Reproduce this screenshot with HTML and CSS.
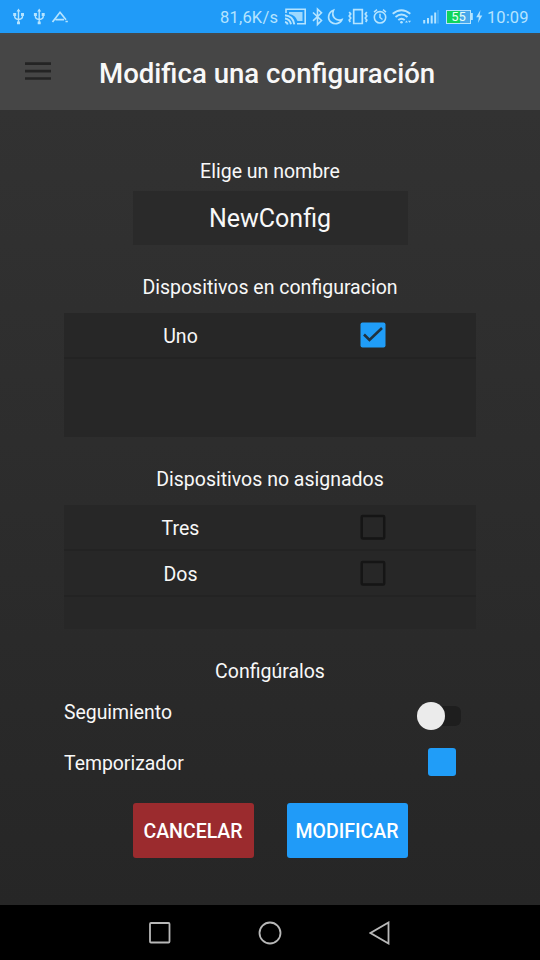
FILE: index.html
```html
<!DOCTYPE html>
<html lang="es">
<head>
<meta charset="utf-8">
<title>Modifica una configuración</title>
<link rel="stylesheet" href="styles.css">
</head>
<body>
<div class="screen">
  <div class="status">
    <svg class="status-left" width="80" height="33" viewBox="0 0 80 33">
      <g id="usb" fill="none" stroke="currentColor" stroke-width="1.4">
        <path d="M18.500 10v13M14.700 14.500v2q0 2.500 3.800 3M22.500 14.500v2q0 2.500-3.800 3"/>
        <path d="M18.500 8.500l2 3h-4zM13.200 13h3v3h-3zM21 13h3v3h-3zM17 21.500h3v2.700h-3z" fill="currentColor" stroke="none"/>
      </g>
      <use href="#usb" x="20.700"/>
      <path d="M52.500 22l7.500-9.700 6 7.500M55.500 19.700h8.500M65.500 21.500h2.300" fill="none" stroke="currentColor" stroke-width="1.700"/>
    </svg>
    <span class="speed">81,6K/s</span>
    <svg width="130" height="33" viewBox="284 0 130 33" fill="none" stroke="currentColor" stroke-width="1.6">
      <path d="M286 13V9.300h19.200v14.400H297"/>
      <path d="M289 12h13.500v9h-5q-2-6-8.500-7z" fill="currentColor" stroke="none" opacity=".85"/>
      <path d="M285 15.300q8 .7 9.300 9M285 18.500q5 .7 6 5.800M285 22q2.300.3 2.700 2.500" stroke-width="1.900"/>
      <path d="M313 12.500l8.500 8-4 4V9l4 3.800-8.500 8" stroke-width="1.600"/>
      <path d="M333.500 10.200c-5.500 2.200-6.500 8.800-2.300 12 4 3 9.500 1.200 10.800-2.700-6.500 2.200-10.800-3.200-8.500-9.300z" stroke-width="1.700"/>
      <path d="M353.700 9.700h8.600v13.800h-8.600zM349.200 12l1.500 2-1.500 2 1.500 2-1.500 2 1 2M366.800 12l-1.500 2 1.500 2-1.500 2 1.500 2-1 2" stroke-width="1.700"/>
      <circle cx="380" cy="17.300" r="5.700"/><path d="M380 13.700v3.800l2.500 2M374 12.200l3-2.500M386 12.200l-3-2.500" stroke-width="1.500"/>
      <path d="M392.700 13.800q8.800-7.300 17.600 0M395.500 17q6-5 12 0M398.300 20q3.200-2.700 6.400 0" stroke-width="1.900"/>
      <circle cx="401.500" cy="22.200" r="1.300" fill="currentColor" stroke="none"/>
      <path d="M405 22.500l1.500-2 1.500 2zM408 20.800l1.500 2 1.500-2z" fill="currentColor" stroke="none"/>
    </svg>
    <svg width="31" height="33" viewBox="414 0 31 33" fill="none" stroke="currentColor" stroke-width="2">
      <path d="M424.200 20v3.500M428 18v5.500M431.700 15.500v8"/><path d="M435.200 12.500v11" /><path d="M438 10v13.500" opacity=".35" stroke-width="1.400"/>
    </svg>
    <span class="battery"><span class="level">55</span></span>
    <svg width="16" height="33" viewBox="471 0 16 33" fill="currentColor">
      <path d="M471 13h1.800v7H471zM480.500 10l-4.300 7.300h2.700l-1 5.700 4.400-7.500h-2.700z"/>
    </svg>
    <span class="clock">10:09</span>
  </div>

  <header class="appbar">
    <svg class="menu" width="26" height="19" viewBox="0 0 26 19"><path d="M0 1.600h26M0 9.100h26M0 16.500h26" stroke="#242424" stroke-width="2.700"/></svg>
    <h1>Modifica una configuración</h1>
  </header>

  <main>
    <h2>Elige un nombre</h2>
    <div class="name">NewConfig</div>

    <h2 class="gap">Dispositivos en configuracion</h2>
    <div class="list">
      <div class="item"><span>Uno</span>
        <svg class="box" width="26" height="26" viewBox="0 0 26 26"><rect x=".5" y=".5" width="25" height="25" rx="2" fill="#209df8"/><path d="M4 12.500l5.500 5.500L22 6" fill="none" stroke="#20323f" stroke-width="2.600"/></svg>
      </div>
    </div>

    <h2 class="gap">Dispositivos no asignados</h2>
    <div class="list">
      <div class="item"><span>Tres</span><svg class="box" width="26" height="26" viewBox="0 0 26 26"><rect x="1.700" y="2" width="22.500" height="22.500" rx="1" fill="none" stroke="#151515" stroke-width="2.500"/></svg></div>
      <div class="item"><span>Dos</span><svg class="box" width="26" height="26" viewBox="0 0 26 26"><rect x="1.700" y="2" width="22.500" height="22.500" rx="1" fill="none" stroke="#151515" stroke-width="2.500"/></svg></div>
    </div>

    <h2 class="gap">Configúralos</h2>
    <div class="options">
      <div class="option"><span>Seguimiento</span><span class="switch"><span class="track"></span><span class="knob"></span></span></div>
      <div class="option timer"><span>Temporizador</span><span class="swatch"></span></div>
    </div>
    <div class="actions">
      <button class="cancel">CANCELAR</button>
      <button class="modify">MODIFICAR</button>
    </div>
  </main>

  <nav>
    <svg width="22" height="22" viewBox="0 0 22 22"><rect x="1" y="1" width="19.500" height="19.500" rx="1"/></svg>
    <svg width="24" height="24" viewBox="0 0 24 24"><circle cx="12" cy="12" r="10.500"/></svg>
    <svg width="22" height="24" viewBox="0 0 22 24"><path d="M19.500 1.500v21L1.500 12z"/></svg>
  </nav>
</div>
</body>
</html>
```
FILE: styles.css
```css
* { box-sizing: border-box; }
body { margin: 0; font-family: Roboto, sans-serif; color: #f8f8f8; }
.screen { width: 540px; height: 960px; display: flex; flex-direction: column; overflow: hidden; }
.status { height: 33px; background: #209bf8; color: #b5e4ff; display: flex; align-items: center; font-size: 16.5px; white-space: nowrap; }
.status svg { flex: none; }
.speed { width: 64px; margin-left: 140px; padding-top: 2px; letter-spacing: .2px; }
.battery { width: 25px; height: 14px; border: 1.500px solid #b5e4ff; background: linear-gradient(90deg, #10d45c 58%, #48a8ec 58%); display: flex; align-items: center; justify-content: center; font-size: 13px; line-height: 12px; color: #e5fff5; margin-left: 1px; }
.clock { padding-top: 2px; margin-left: 0; letter-spacing: .1px; }
.appbar { height: 77px; background: #464646; display: flex; align-items: center; border-top: 2px solid #45494b; padding-left: 25px; }
.menu { margin-top: -2px; }
h1 { margin: 2px 0 0 48px; font-size: 27.6px; line-height: 32px; font-weight: 500; white-space: nowrap; }
main { height: 795px; background: linear-gradient(#323232, #262626); display: flex; flex-direction: column; align-items: center; padding-top: 50px; }
h2 { margin: 0 0 7px; font-size: 19.5px; font-weight: 400; line-height: 24px; height: 24px; white-space: nowrap; }
.name { width: 275px; height: 54px; background: #2a2a2a; font-size: 25px; display: flex; align-items: center; justify-content: center; padding-top: 1px; }
.gap { margin: 31px 0 13px; }
.list { width: 412px; height: 124px; background: #272727; }
.item { height: 46px; display: grid; grid-template-columns: 233px 1fr; align-items: center; border-bottom: 2px solid #232323; font-size: 19.5px; }
.item span { text-align: center; padding-top: 2px; }
.box { margin-left: 63px; }
.options { width: 412px; font-size: 19.4px; line-height: 24px; margin-top: -1px; }
.option { display: flex; justify-content: space-between; align-items: flex-start; height: 47px; padding: 6px 15px 0 0; }
.option > span:first-child { margin-top: -1px; }
.option + .option { height: 44px; padding: 5px 20px 0 0; }
.option + .option > span:first-child { margin-top: 4px; }
.switch { width: 44px; height: 28px; display: grid; align-items: center; }
.track, .knob { grid-area: 1 / 1; }
.track { width: 32px; height: 20px; border-radius: 6px; background: #1e1e1e; margin-left: 12px; }
.knob { width: 28px; height: 28px; border-radius: 50%; background: #ebebeb; }
.swatch { width: 28px; height: 28px; border-radius: 3px; background: #209df8; }
.actions { display: flex; gap: 33px; margin: 16px 0 0; }
button { width: 121px; height: 55px; border: 0; border-radius: 3px; padding: 2px 0 0; font: 500 19.5px Roboto, sans-serif; color: #fff; }
.cancel { background: #9b2b2e; }
.modify { background: #209bf8; }
nav { height: 55px; background: #000; display: flex; justify-content: center; align-items: center; gap: 87px; }
nav svg { fill: none; stroke: #b8b8b8; stroke-width: 1.800; }
```
